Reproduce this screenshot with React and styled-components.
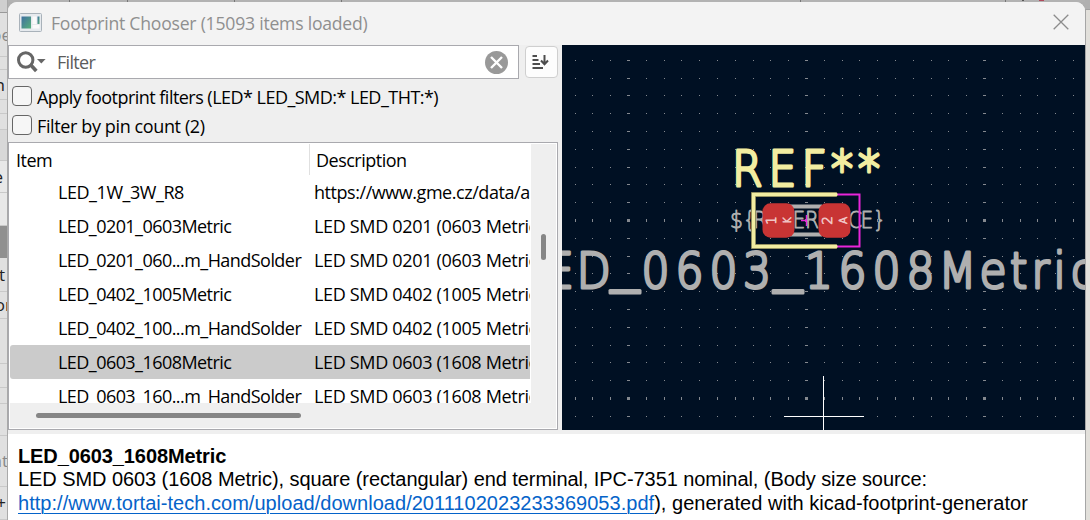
import React from "react";
import styled, { createGlobalStyle } from "styled-components";

const Global = createGlobalStyle`
  * { box-sizing: border-box; }
  html, body { margin: 0; padding: 0; }
  body { overflow: hidden; }
`;

const UI = `"Open Sans", "Noto Sans", sans-serif`;

const Desktop = styled.div`
  width: 1090px;
  height: 520px;
  display: flex;
  background: #b0b0b0;
  overflow: hidden;
  font-family: ${UI};
`;

const BehindLeft = styled.div`
  width: 8px;
  flex: none;
  display: flex;
  flex-direction: column;
  border-right: 1px solid #a9a9a9;
`;

const BehindCell = styled.div`
  height: ${(p) => p.$h}px;
  flex: none;
  overflow: hidden;
  display: flex;
  align-items: center;
  justify-content: flex-end;
  background: ${(p) => p.$bg || "#e0e0e0"};
  border-bottom: 1px solid ${(p) => p.$line || "#c9c9c9"};
  color: ${(p) => p.$color || "#222"};
  font-size: 17px;
  line-height: 24px;
`;

const BehindText = styled.span`
  margin-right: ${(p) => p.$gap}px;
`;

const BehindRight = styled.div`
  width: 5px;
  flex: none;
  margin-top: 9px;
  border-left: 1px solid #a6a6a6;
  border-top: 1px solid #a0a0a0;
  background: #e2e0db;
`;

const Center = styled.div`
  width: 1077px;
  flex: none;
  display: flex;
  flex-direction: column;
`;

const TopTicks = styled.div`
  height: 2px;
  flex: none;
  display: grid;
  grid-template-columns: 62px 58px 107px 107px 459px 205px 18px 20px 1fr;
  background: #b2b2b2;
`;

const Tick = styled.span`
  height: ${(p) => (p.$w ? 1 : 2)}px;
  border-right: ${(p) => p.$w || 1}px solid ${(p) => p.$color || "#777"};
`;

const Window = styled.div`
  flex: 1;
  min-height: 0;
  display: flex;
  flex-direction: column;
  background: #efefef;
  border-radius: 9px 9px 0 0;
  overflow: hidden;
`;

const TitleBar = styled.header`
  height: 43px;
  flex: none;
  display: flex;
  align-items: center;
  padding: 0 16px 3px 11px;
  background: #f3f3f3;
  color: #8f8f8f;
`;

const Title = styled.h1`
  flex: 1;
  margin: 1px 0 0 9px;
  font-size: 17.6px;
  line-height: 24px;
  font-weight: 400;
  letter-spacing: -0.22px;
  white-space: pre;
`;

const Body = styled.div`
  height: 385px;
  flex: none;
  display: flex;
`;

const Left = styled.section`
  width: 554px;
  flex: none;
  display: flex;
  flex-direction: column;
`;

const SearchRow = styled.div`
  height: 34px;
  display: flex;
  gap: 6px;
  align-items: flex-start;
`;

const SearchBox = styled.div`
  width: 511px;
  height: 34px;
  display: flex;
  align-items: center;
  padding: 0 10px 0 8px;
  background: #fff;
  border: 1px solid #a9a9ae;
`;

const Placeholder = styled.span`
  flex: 1;
  padding-left: 11px;
  font-size: 18px;
  line-height: 24px;
  letter-spacing: -0.7px;
  color: #5c5c5c;
`;

const SortButton = styled.button`
  width: 33px;
  height: 32px;
  margin-top: 1px;
  padding: 0 2px 1px 0;
  display: flex;
  align-items: center;
  justify-content: center;
  background: #fdfdfd;
  border: 1px solid #cfcfcf;
  border-radius: 4px;
`;

const Checks = styled.div`
  height: 63px;
  padding: 3px 0 0 4px;
  display: flex;
  flex-direction: column;
`;

const Check = styled.label`
  height: 29px;
  display: flex;
  align-items: center;
  gap: 5px;
  font-size: 18px;
  line-height: 24px;
  letter-spacing: ${(p) => p.$ls}px;
  color: #000;
  white-space: pre;
`;

const Box = styled.span`
  width: 20px;
  height: 20px;
  margin-bottom: 1px;
  border: 1px solid #666;
  border-radius: 4px;
  background: #f6f6f6;
`;

const Tree = styled.div`
  width: 550px;
  height: 288px;
  padding: 1px;
  border: 1px solid #a9a9ae;
  background: #fff;
  display: grid;
  grid-template-columns: 521px 25px;
  grid-template-rows: 259px 25px;
`;

const Table = styled.div`
  overflow: hidden;
  display: flex;
  flex-direction: column;
`;

const Row = styled.div`
  height: 34px;
  flex: none;
  display: grid;
  grid-template-columns: 299px 221px;
  align-items: center;
  background: ${(p) => (p.$selected ? "#cbcbcb" : "#fff")};
  border-radius: 3px 0 0 3px;
  margin-right: 1px;
  font-size: 18px;
  line-height: 24px;
  white-space: pre;
  color: #000;
`;

const HeadRow = styled(Row)`
  height: 31px;
  grid-template-columns: 300px 220px;
`;

const HeadCell = styled.div`
  height: 31px;
  padding: 4px 0 0 6px;
  border-right: ${(p) => (p.$line ? "1px solid #e0e0e0" : "none")};
  letter-spacing: ${(p) => p.$ls}px;
`;

const Name = styled.div`
  padding-left: 48px;
  letter-spacing: ${(p) => p.$ls}px;
`;

const Desc = styled.div`
  padding-left: 5px;
  overflow: hidden;
  letter-spacing: ${(p) => p.$ls}px;
`;

const VTrack = styled.div`
  background: #efefef;
  padding: 90px 0 0 10px;
`;

const VThumb = styled.div`
  width: 5px;
  height: 26px;
  border-radius: 3px;
  background: #868686;
`;

const HTrack = styled.div`
  grid-column: 1 / 3;
  background: #efefef;
  padding: 10px 0 0 26px;
`;

const HThumb = styled.div`
  width: 265px;
  height: 5px;
  border-radius: 3px;
  background: #868686;
`;

const Preview = styled.section`
  width: 523px;
  height: 385px;
  background: #001023;
  overflow: hidden;
`;

const Details = styled.footer`
  flex: 1;
  margin-top: 4px;
  padding: 10px 10px 0;
  background: #fff;
  color: #000;
  font-family: "Liberation Sans", Arial, sans-serif;
  font-size: 20px;
  line-height: 24px;
  white-space: pre;
`;

const Heading = styled.h2`
  margin: 0;
  font-size: 20px;
  line-height: 24px;
  font-weight: 700;
  letter-spacing: ${(p) => p.$ls}px;
`;

const Line = styled.p`
  margin: 0;
  line-height: 23.5px;
  letter-spacing: ${(p) => p.$ls}px;
`;

const Link = styled.a`
  color: #0563c9;
  text-decoration: underline;
  text-decoration-thickness: 1px;
  text-underline-offset: 3px;
`;

const items = [
  ["LED_1W_3W_R8", "https://www.gme.cz/data/a", -0.45],
  ["LED_0201_0603Metric", "LED SMD 0201 (0603 Metric)", -0.33],
  ["LED_0201_060...m_HandSolder", "LED SMD 0201 (0603 Metric)", -0.33],
  ["LED_0402_1005Metric", "LED SMD 0402 (1005 Metric)", -0.33],
  ["LED_0402_100...m_HandSolder", "LED SMD 0402 (1005 Metric)", -0.33],
  ["LED_0603_1608Metric", "LED SMD 0603 (1608 Metric)", -0.33],
  ["LED_0603_160...m_HandSolder", "LED SMD 0603 (1608 Metric)", -0.33],
];

const AppIcon = () => (
  <svg width="23" height="19" viewBox="0 0 23 19">
    <defs>
      <linearGradient id="pane" x1="0" y1="0" x2="1" y2="1">
        <stop offset="0" stopColor="#3f6fa0" />
        <stop offset="1" stopColor="#55b07a" />
      </linearGradient>
    </defs>
    <rect x="0.5" y="0.5" width="22" height="18" rx="1" fill="#e6eaee" stroke="#a9b2ba" />
    <rect x="2.5" y="3.5" width="9.5" height="12" fill="url(#pane)" />
    <rect x="13.5" y="3.5" width="4" height="7.5" fill="#fafafa" />
    <rect x="13.5" y="12" width="7" height="3.5" fill="#fafafa" />
    <rect x="18.5" y="3.5" width="2" height="7.5" fill="url(#pane)" />
  </svg>
);

const CloseIcon = () => (
  <svg width="16" height="16" viewBox="0 0 16 16" stroke="#8c8c8c" strokeWidth="1.3">
    <path d="M0.7 0.7L15.3 15.3M15.3 0.7L0.7 15.3" />
  </svg>
);

const SearchIcon = () => (
  <svg width="29" height="22" viewBox="0 0 29 22" fill="none">
    <circle cx="8.7" cy="9" r="7.2" stroke="#666" strokeWidth="3" />
    <path d="M13.8 14L19.3 20" stroke="#666" strokeWidth="3.6" />
    <path d="M20 8H28.6L24.3 12.6Z" fill="#666" />
  </svg>
);

const ClearIcon = () => (
  <svg width="23" height="23" viewBox="0 0 23 23">
    <circle cx="11.5" cy="11.5" r="11.5" fill="#999" />
    <path d="M6 6L17 17M17 6L6 17" stroke="#fff" strokeWidth="2.4" />
  </svg>
);

const SortIcon = () => (
  <svg width="17" height="16" viewBox="0 0 17 16" fill="none" stroke="#4d4d4d" strokeWidth="2">
    <path d="M0.5 2H5M0.5 6H6.5M0.5 10H8M0.5 14H11" />
    <path d="M12.5 1V10M9 6.5L12.5 10.2L16 6.5" />
  </svg>
);

const cols = Array.from({ length: 29 }, (_, i) => i - 13);
const rows = Array.from({ length: 21 }, (_, i) => i - 9);

const Grid = () => (
  <g fill="#85898f" shapeRendering="crispEdges">
    {rows.map((r) =>
      cols.map((c) => {
        const w = c % 10 === 0 ? 3 : 1;
        const h = r % 10 === 0 ? 3 : 1;
        const x = Math.round(806 + c * 17.8) - (w - 1) / 2;
        const y = Math.round(220 + r * 17.8) - (h - 1) / 2;
        return <rect key={`${r}:${c}`} x={x} y={y} width={w} height={h} />;
      })
    )}
  </g>
);

const Strokes = styled.text`
  font-family: "DejaVu Sans", sans-serif;
  font-weight: 200;
  font-size: ${(p) => p.$size}px;
  fill: ${(p) => p.$color};
  stroke: ${(p) => p.$color};
  stroke-width: ${(p) => p.$stroke}px;
  stroke-linejoin: round;
  stroke-linecap: round;
`;

const Underscore = styled.tspan`
  font-size: 66px;
`;

/* Board text: narrow letters, each set at its own x. */
const NARROW = 0.88;

const BoardText = ({ text, xs, y, ...rest }) => (
  <Strokes transform={`scale(${NARROW} 1)`} {...rest}>
    {Array.from(text).map((ch, i) =>
      ch === "_" ? (
        <Underscore key={i} x={xs[i] / NARROW} y={y - 11}>{ch}</Underscore>
      ) : (
        <tspan key={i} x={xs[i] / NARROW} y={y}>{ch}</tspan>
      )
    )}
  </Strokes>
);

const PadText = ({ x, y, size, children }) => (
  <Strokes
    transform={`translate(${x} ${y}) rotate(-90)`}
    textAnchor="middle"
    $size={size}
    $stroke={0.8}
    $color="#f0c4c4"
  >
    {children}
  </Strokes>
);

const Footprint = () => (
  <svg width="523" height="385" viewBox="562 45 523 385" display="block">
    <Grid />
    <BoardText
      text="LED_0603_1608Metric"
      xs={[512, 546, 576.7, 610.5, 641.5, 675.5, 709.5, 743, 773.5, 804.7, 838.5, 872.5, 906.5, 938.5, 979.4, 1010, 1031.5, 1053.4, 1071]}
      y={288.3}
      $size={50}
      $stroke={3.2}
      $color="#afafaf"
    />
    <BoardText
      text="REF**"
      xs={[732, 768.4, 801.4, 831, 858]}
      y={186.3}
      $size={50}
      $stroke={3.2}
      $color="#f2eda1"
    />
    <BoardText
      text="${REFERENCE}"
      xs={[730, 743, 753, 767, 780, 792.5, 805, 818, 832, 848, 860.5, 873]}
      y={228.5}
      $size={23}
      $stroke={0.9}
      $color="#afafaf"
    />
    <path d="M790 206.5H822M790 234.5H822" stroke="#afafaf" strokeWidth="4" />
    <path d="M837 194.5H859.5V246.5H837" fill="none" stroke="#e825d9" strokeWidth="2" />
    <path d="M837 194.5H753.5V246.5H837" fill="none" stroke="#77754f" strokeWidth="5" />
    <path d="M836 194.5H753.5V246.5H836" fill="none" stroke="#f2eda1" strokeWidth="3.4" strokeLinecap="round" />
    <rect x="762.5" y="203.3" width="32" height="34.4" rx="8" fill="#c83434" />
    <rect x="818.5" y="203.3" width="32" height="34.4" rx="8" fill="#c83434" />
    <path d="M801 220.5H807M806.5 215V226" stroke="#e825d9" strokeWidth="1.4" />
    <PadText x={775.6} y={220.5} size={13.5}>1</PadText>
    <PadText x={790.5} y={220.5} size={10}>K</PadText>
    <PadText x={832} y={220.5} size={13.5}>2</PadText>
    <PadText x={847} y={220.5} size={10.5}>A</PadText>
    <path d="M784 416.5H864M823.5 376V430" stroke="#fff" strokeWidth="1" />
  </svg>
);

export default function App() {
  return (
    <Desktop>
      <Global />
      <BehindLeft>
        <BehindCell $h={13} $bg="#cfcfcf" $line="#999" />
        <BehindCell $h={44} $color="#888"><BehindText $gap={-4}>pe</BehindText></BehindCell>
        <BehindCell $h={13} />
        <BehindCell $h={30}><BehindText $gap={2}>n</BehindText></BehindCell>
        <BehindCell $h={14} />
        <BehindCell $h={16} />
        <BehindCell $h={31} $bg="#d8d8d8" />
        <BehindCell $h={32} $bg="#e8e8e8"><BehindText $gap={4}>e</BehindText></BehindCell>
        <BehindCell $h={33} $bg="#e8e8e8" />
        <BehindCell $h={32} $bg="#909090" $line="#909090" />
        <BehindCell $h={34}><BehindText $gap={2}>t</BehindText></BehindCell>
        <BehindCell $h={27}><BehindText $gap={-5}>or</BehindText></BehindCell>
        <BehindCell $h={45} />
        <BehindCell $h={24} />
        <BehindCell $h={16} />
        <BehindCell $h={32} />
        <BehindCell $h={51} $color="#888"><BehindText $gap={-1}>at</BehindText></BehindCell>
        <BehindCell $h={33}><BehindText $gap={1}>+</BehindText></BehindCell>
      </BehindLeft>
      <Center>
        <TopTicks>
          <Tick /><Tick /><Tick /><Tick /><Tick /><Tick />
          <Tick $w={2} $color="#555" /><Tick $w={5} $color="#b04a5c" />
        </TopTicks>
        <Window>
          <TitleBar>
            <AppIcon />
            <Title>Footprint Chooser (15093 items loaded)</Title>
            <CloseIcon />
          </TitleBar>
          <Body>
            <Left>
              <SearchRow>
                <SearchBox>
                  <SearchIcon />
                  <Placeholder>Filter</Placeholder>
                  <ClearIcon />
                </SearchBox>
                <SortButton><SortIcon /></SortButton>
              </SearchRow>
              <Checks>
                <Check $ls={-0.53}><Box />Apply footprint filters (LED* LED_SMD:* LED_THT:*)</Check>
                <Check $ls={-0.38}><Box />Filter by pin count (2)</Check>
              </Checks>
              <Tree>
                <Table>
                  <HeadRow>
                    <HeadCell $line $ls={-0.5}>Item</HeadCell>
                    <HeadCell $ls={-0.5}>Description</HeadCell>
                  </HeadRow>
                  {items.map(([name, desc, ls]) => (
                    <Row key={name} $selected={name === "LED_0603_1608Metric"}>
                      <Name $ls={name === "LED_1W_3W_R8" ? -0.45 : -0.55}>{name}</Name>
                      <Desc $ls={ls}>{desc}</Desc>
                    </Row>
                  ))}
                </Table>
                <VTrack><VThumb /></VTrack>
                <HTrack><HThumb /></HTrack>
              </Tree>
            </Left>
            <Preview><Footprint /></Preview>
          </Body>
          <Details>
            <Heading $ls={-0.1}>LED_0603_1608Metric</Heading>
            <Line $ls={-0.07}>LED SMD 0603 (1608 Metric), square (rectangular) end terminal, IPC-7351 nominal, (Body size source:</Line>
            <Line $ls={0.03}><Link>http://www.tortai-tech.com/upload/download/2011102023233369053.pdf</Link>), generated with kicad-footprint-generator</Line>
          </Details>
        </Window>
      </Center>
      <BehindRight />
    </Desktop>
  );
}
